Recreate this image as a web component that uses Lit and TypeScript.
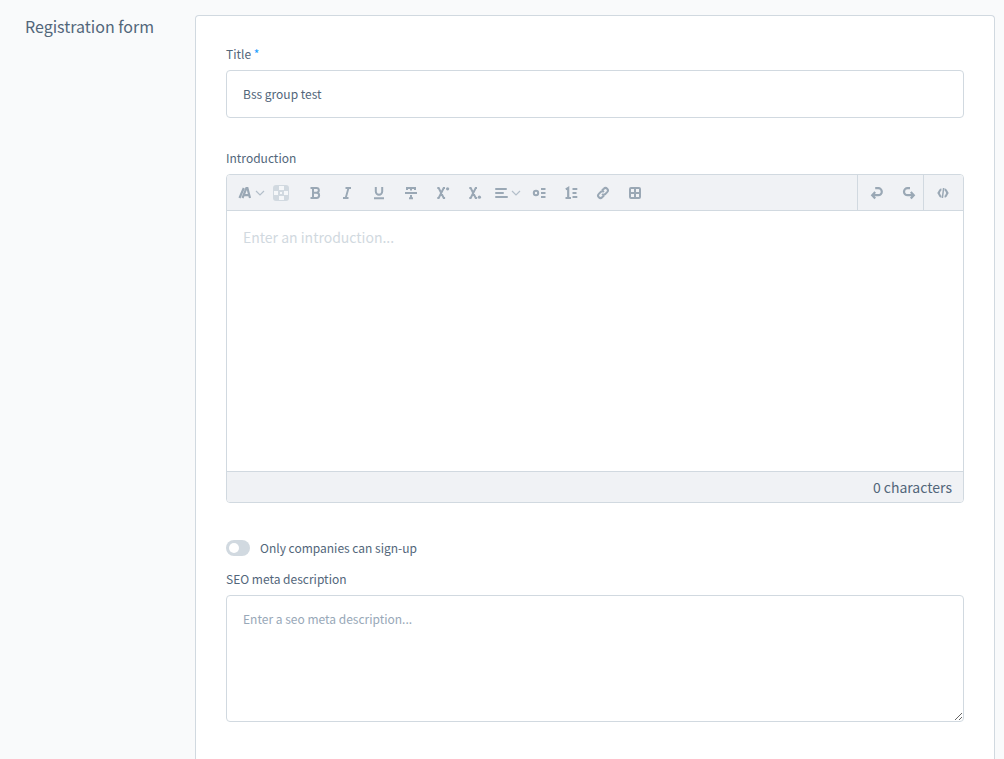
import { LitElement, html, css, svg } from "lit";
import { customElement, state } from "lit/decorators.js";

const icons: Record<string, unknown> = {
  color: svg`<path d="M2.500 13 6.800 3M5.500 13 9.400 3h1L13 13M7.500 10.200H12" stroke-width="2.200"/>`,
  bold: svg`<path d="M3.500 3h6a2.300 2.300 0 0 1 0 4.700H6M9.500 7.700a2.600 2.600 0 0 1 0 5.300h-6M6 3v10" stroke-width="2"/>`,
  italic: svg`<path d="M6.500 3H12M4 13h5.500M9.500 3 6.700 13" stroke-width="1.900"/>`,
  underline: svg`<path d="M4.800 2v4.600a3.200 3.200 0 0 0 6.400 0V2M3 13.200h10" stroke-width="2"/>`,
  strike: svg`<path d="M4 5V3h8v2M8 3v2.500M2 8h12M8 10v3.200M6 13.200h4" stroke-width="2"/>`,
  sup: svg`<path d="M2.300 3h1.400l5 10h1.400M10 3H8.700l-5 10H2.300" stroke-width="2"/><circle cx="12.600" cy="3.800" r="1.600" class="solid"/>`,
  sub: svg`<path d="M2.300 3h1.400l5 10h1.400M10 3H8.700l-5 10H2.300" stroke-width="2"/><circle cx="12.400" cy="12.200" r="1.600" class="solid"/>`,
  align: svg`<path d="M3 4h10M3 8h7M3 12h11" stroke-width="2" stroke-linecap="round"/>`,
  bullets: svg`<circle cx="5" cy="8" r="2.200" stroke-width="2"/><path d="M10 4h4.500M10 8h4.500M10 12h4.500" stroke-width="1.900"/>`,
  numbers: svg`<path d="M2.800 4.400 5.200 3v10M2.500 13H8" stroke-width="2.200"/><path d="M9.500 4h4.800M9.500 8h4M9.500 12h4.800" stroke-width="1.900"/>`,
  link: svg`<path d="m7 5.400 1.800-1.700a2.300 2.300 0 0 1 3.400 3.400L10.300 9a2.200 2.200 0 0 1-3.200 0M9 10.600l-1.800 1.700a2.300 2.300 0 0 1-3.400-3.400L5.700 7a2.200 2.200 0 0 1 3.200 0" stroke-width="2"/>`,
  table: svg`<rect x="3" y="3" width="10" height="10" rx="1" stroke-width="2"/><path d="M8 3v10M3 8h10" stroke-width="2"/>`,
  undo: svg`<path d="M6.200 3.200h3.100a3.500 3.500 0 0 1 0 7H3.800M6.200 7 3.200 10.200l3 3.400" stroke-width="2.200"/>`,
  redo: svg`<path d="M10 3.200H7.500a3.500 3.500 0 0 0 0 7h5.800M10.800 7l3 3.200-3 3.400" stroke-width="2.200"/>`,
  code: svg`<path d="M5.400 4.200C3.500 4.600 3.600 7 2.600 8c1 1 .9 3.400 2.800 3.800M8.600 4.200c1.900.4 1.800 2.800 2.800 3.800-1 1-.9 3.400-2.800 3.800" stroke-width="2.100"/><path d="M7.600 3 6.400 13" stroke-width="1.500"/>`,
};

const chevron = html`<svg class="chevron" viewBox="0 0 10 10" aria-hidden="true"><path d="m1 3 4 4 4-4" /></svg>`;

const formatTools = [
  ["bold", "Bold"],
  ["italic", "Italic"],
  ["underline", "Underline"],
  ["strike", "Strikethrough"],
  ["sup", "Superscript"],
  ["sub", "Subscript"],
];

const insertTools = [
  ["bullets", "Bulleted list"],
  ["numbers", "Numbered list"],
  ["link", "Insert link"],
  ["table", "Insert table"],
];

@customElement("text-editor")
export class TextEditor extends LitElement {
  @state() private value = "";

  static styles = css`
    :host {
      display: block;
      border: 1px solid #d1d9e0;
      border-radius: 4px;
      overflow: hidden;
    }
    .toolbar {
      display: flex;
      height: 36px;
      box-sizing: border-box;
      background: #f0f2f5;
      border-bottom: 1px solid #d1d9e0;
    }
    .group {
      display: flex;
    }
    .main {
      flex: 1;
      padding-left: 8px;
    }
    .side {
      border-left: 1px solid #d1d9e0;
    }
    .history {
      padding-left: 3px;
    }
    button {
      display: flex;
      align-items: center;
      justify-content: center;
      width: 32px;
      padding: 0;
      border: 0;
      background: none;
      cursor: pointer;
    }
    .history button:last-child {
      width: 30px;
    }
    .swatch {
      width: 28px;
      margin-right: 4px;
    }
    .code {
      width: 39px;
    }
    .split {
      gap: 2px;
    }
    .icon {
      flex: none;
      width: 16px;
      height: 16px;
      fill: none;
      stroke: #9aa8b5;
    }
    .solid {
      fill: #9aa8b5;
      stroke: none;
    }
    .chevron {
      flex: none;
      width: 10px;
      height: 10px;
      fill: none;
      stroke: #b3bfca;
      stroke-width: 1.2;
    }
    .checker {
      width: 16px;
      height: 16px;
      border-radius: 3px;
      fill: #f5f7f9;
      background: #d1d9e0;
    }
    textarea {
      display: block;
      width: 100%;
      height: 260px;
      box-sizing: border-box;
      padding: 14px 16px;
      border: 0;
      outline: 0;
      resize: none;
      background: #fff;
      color: #52667a;
      font: inherit;
      font-size: 14px;
      line-height: 24px;
    }
    textarea::placeholder {
      color: #d1d9e0;
    }
    .count {
      height: 30px;
      padding: 0 11px;
      border-top: 1px solid #d1d9e0;
      background: #f0f2f5;
      text-align: right;
      font-size: 14px;
      line-height: 30px;
    }
  `;

  private icon(name: string) {
    return html`<svg class="icon" viewBox="0 0 16 16" aria-hidden="true">${icons[name]}</svg>`;
  }

  private tool([name, label]: string[]) {
    return html`<button type="button" aria-label=${label}>${this.icon(name)}</button>`;
  }

  render() {
    return html`
      <div class="toolbar" role="toolbar" aria-label="Formatting">
        <div class="group main">
          <button type="button" class="split" aria-label="Text style">${this.icon("color")}${chevron}</button>
          <button type="button" class="swatch" aria-label="Text color">
            <svg class="checker" viewBox="0 0 16 16" aria-hidden="true">
              <path d="M6 1h4v4H6zM2 2h3v3H2zM11 2h3v3h-3z" fill="none" />
              <path d="M6 1h5v4H6zM1 6h4v4H1zM7 7h2v2H7zM11 6h4v4h-4zM6 11h5v4H6z" />
            </svg>
          </button>
          ${formatTools.map((t) => this.tool(t))}
          <button type="button" class="split" aria-label="Alignment">${this.icon("align")}${chevron}</button>
          ${insertTools.map((t) => this.tool(t))}
        </div>
        <div class="group side history">${this.tool(["undo", "Undo"])}${this.tool(["redo", "Redo"])}</div>
        <div class="group side">
          <button type="button" class="code" aria-label="Source code">${this.icon("code")}</button>
        </div>
      </div>
      <textarea
        aria-label="Introduction"
        placeholder="Enter an introduction..."
        .value=${this.value}
        @input=${(e: Event) => (this.value = (e.target as HTMLTextAreaElement).value)}
      ></textarea>
      <div class="count">${this.value.length} characters</div>
    `;
  }
}

@customElement("app-root")
export class AppRoot extends LitElement {
  static styles = css`
    :host {
      display: grid;
      grid-template-columns: 170px minmax(0, 1fr);
      min-height: 100vh;
      box-sizing: border-box;
      padding: 15px 9px 0 25px;
      background: #f9fafb;
      color: #52667a;
      font-family: "Noto Sans CJK SC", sans-serif;
      font-size: 12px;
      line-height: 16px;
    }
    h1 {
      margin: 0;
      font-size: 16px;
      font-weight: 400;
      line-height: 22px;
    }
    form {
      display: flex;
      flex-direction: column;
      padding: 30px 30px 37px;
      border: 1px solid #d1d9e0;
      border-bottom: 0;
      border-radius: 4px 4px 0 0;
      background: #fff;
    }
    .field {
      display: flex;
      flex-direction: column;
      gap: 8px;
    }
    .field + .field {
      margin-top: 32px;
    }
    .required {
      color: #189eff;
    }
    .control {
      width: 100%;
      box-sizing: border-box;
      padding: 0 16px 2px;
      border: 1px solid #d1d9e0;
      border-radius: 4px;
      outline: 0;
      background: #fff;
      color: #52667a;
      font: inherit;
    }
    input.control {
      height: 48px;
    }
    textarea.control {
      display: block;
      height: 127px;
      padding: 12px 16px;
      line-height: 22px;
      resize: vertical;
    }
    .control::placeholder {
      color: #98a8b8;
    }
    .switch {
      display: flex;
      align-items: center;
      gap: 10px;
      margin: 37px 0 15px;
    }
    .switch input {
      appearance: none;
      display: flex;
      align-items: center;
      width: 24px;
      height: 16px;
      margin: 0;
      padding: 0 3px;
      border-radius: 8px;
      background: #d1d9e0;
    }
    .switch input::before {
      content: "";
      width: 10px;
      height: 10px;
      border-radius: 50%;
      background: #fff;
    }
    .switch input:checked {
      justify-content: flex-end;
      background: #189eff;
    }
  `;

  render() {
    return html`
      <h1>Registration form</h1>
      <form>
        <div class="field">
          <label for="title">Title <span class="required">*</span></label>
          <input class="control" id="title" type="text" value="Bss group test" required />
        </div>
        <div class="field">
          <label for="intro">Introduction</label>
          <text-editor id="intro"></text-editor>
        </div>
        <div class="switch">
          <input id="companies" type="checkbox" role="switch" />
          <label for="companies">Only companies can sign-up</label>
        </div>
        <div class="field">
          <label for="seo">SEO meta description</label>
          <textarea class="control" id="seo" placeholder="Enter a seo meta description..."></textarea>
        </div>
      </form>
    `;
  }
}
